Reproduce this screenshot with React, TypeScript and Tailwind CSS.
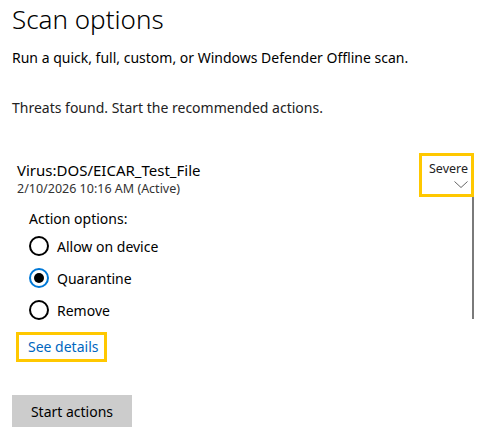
import React from 'react';

const font = { fontFamily: '"Noto Sans", "Open Sans", sans-serif' };

const Radio: React.FC<{ label: string; checked?: boolean }> = ({ label, checked }) => (
  <label className="flex items-center h-[32px] gap-[8px] cursor-pointer">
    <span
      className={`flex items-center justify-center w-[20px] h-[20px] rounded-full border-2 ${
        checked ? 'border-[#0078d7]' : 'border-black'
      }`}
    >
      {checked && <span className="w-[10px] h-[10px] rounded-full bg-black" />}
    </span>
    <span className="text-[14px] text-black">{label}</span>
  </label>
);

const App: React.FC = () => {
  return (
    <div className="w-[482px] h-[437px] bg-white overflow-hidden" style={font}>
      <div className="pl-[12px] pr-[8px]">
        <h1 className="text-[26px] font-light leading-[38px] text-black">Scan options</h1>
        <p className="mt-[10px] text-[14px] leading-[20px] text-black">
          Run a quick, full, custom, or Windows Defender Offline scan.
        </p>
        <p className="mt-[30px] text-[14px] leading-[20px] text-[#222]">
          Threats found. Start the recommended actions.
        </p>

        <div className="relative mt-[40px]">
          {/* scrollbar */}
          <div className="absolute right-0 top-[14px] w-[2px] h-[147px] bg-[#7a7a7a]" />

          <div className="flex justify-between pl-[5px]">
            <div className="pt-[2px]">
              <div className="text-[15px] leading-[20px] text-black">Virus:DOS/EICAR_Test_File</div>
              <div className="text-[12.5px] leading-[18px] text-[#333]">2/10/2026 10:16 AM (Active)</div>
            </div>
            <div className="relative -mt-[5px] w-[55px] h-[44px] shrink-0 border-[3px] border-[#ffc800] flex flex-col items-end pr-[3px] pt-[5px]">
              <span className="text-[12.5px] leading-[16px] text-[#222] whitespace-nowrap">Severe</span>
              <svg width="14" height="7" viewBox="0 0 14 7" className="mt-[4px]">
                <path d="M0.5 0.5 L7 6.5 L13.5 0.5" fill="none" stroke="#666" strokeWidth="1" />
              </svg>
            </div>
          </div>

          <div className="pl-[17px] mt-[10px]">
            <div className="text-[14px] leading-[22px] text-black">Action options:</div>
            <Radio label="Allow on device" />
            <Radio label="Quarantine" checked />
            <Radio label="Remove" />
          </div>

          <div className="mt-[6px] ml-[4px] w-[91px] h-[30px] border-[3px] border-[#ffc800] flex items-center pl-[9px]">
            <a href="#" className="text-[14px] leading-[20px] text-[#0067c0] whitespace-nowrap">See details</a>
          </div>
        </div>

        <button className="mt-[33px] w-[120px] h-[32px] bg-[#cccccc] text-[14px] text-black">
          Start actions
        </button>
      </div>
    </div>
  );
};

export default App;
